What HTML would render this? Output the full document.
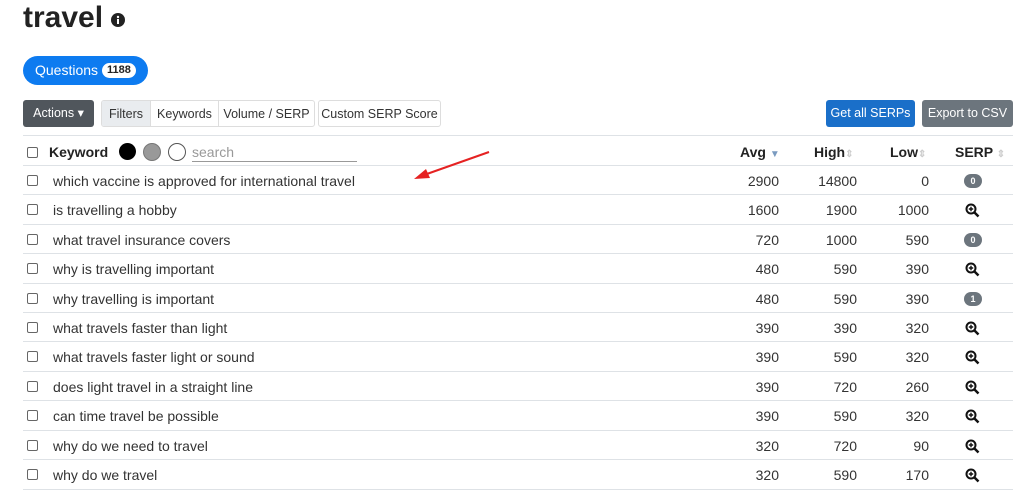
<!DOCTYPE html><html><head><style>
body{margin:0;width:1024px;height:494px;background:#fff;font-family:"Liberation Sans",sans-serif;color:#212529;position:relative;overflow:hidden}
.a{position:absolute}
h1{position:absolute;left:23px;top:0;margin:0;font-size:30px;font-weight:bold;line-height:36px;color:#222}
.btn{position:absolute;top:100px;height:27px;line-height:27px;font-size:12.5px;border-radius:3px;text-align:center;box-sizing:border-box;white-space:nowrap}
.row{position:absolute;left:23px;width:990px;height:29px;border-top:1px solid #dee2e6;font-size:14px;color:#333}
.row span{position:absolute;top:7px;white-space:nowrap}
.cb{position:absolute;left:4px;top:9px;width:9px;height:9px;border:1px solid #666;border-radius:2px}
.r{text-align:right;width:60px}
.bd{position:absolute;left:941px;top:8px;width:18px;height:14px;border-radius:7px;background:#6c757d;color:#fff;font-size:9px;font-weight:bold;text-align:center;line-height:14px}
</style></head><body>
<h1>travel <svg width="14" height="14" viewBox="0 0 14 14" style="vertical-align:0"><circle cx="7" cy="7" r="7" fill="#222"/><rect x="6" y="6" width="2" height="5" fill="#fff"/><circle cx="7" cy="4" r="1.2" fill="#fff"/></svg></h1>
<div class="a" style="left:23px;top:56px;width:125px;height:29px;border-radius:15px;background:#0d7bf0;color:#fff;font-size:14px;line-height:29px"><span style="margin-left:12px">Questions</span><span style="position:absolute;left:79px;top:7px;background:#fff;color:#222;font-size:11px;font-weight:bold;line-height:15px;padding:0 5px;border-radius:8px">1188</span></div>
<div class="btn" style="left:23px;width:71px;background:#50565c;color:#fff">Actions ▾</div>
<div class="btn" style="left:101px;width:214px;border:1px solid #ddd;color:#333;text-align:left;overflow:hidden;display:flex"><span style="width:48px;text-align:center;background:#e9ecef;border-right:1px solid #ddd">Filters</span><span style="width:67px;text-align:center;border-right:1px solid #ddd">Keywords</span><span style="flex:1;text-align:center">Volume / SERP</span></div>
<div class="btn" style="left:318px;width:123px;border:1px solid #ddd;color:#333">Custom SERP Score</div>
<div class="btn" style="left:826px;width:89px;background:#1a6fc9;color:#fff">Get all SERPs</div>
<div class="btn" style="left:922px;width:91px;background:#6c757d;color:#fff">Export to CSV</div>
<div class="row" style="top:135px;height:30px;font-weight:bold;color:#222">
<div class="cb" style="top:11px"></div><span style="left:26px;top:8px">Keyword</span>
<div class="a" style="left:96px;top:7px;width:17px;height:17px;border-radius:50%;background:#000"></div>
<div class="a" style="left:120px;top:7px;width:16px;height:16px;border-radius:50%;background:#999;border:1px solid #777"></div>
<div class="a" style="left:145px;top:7px;width:16px;height:16px;border-radius:50%;border:1px solid #555"></div>
<div class="a" style="left:169px;top:8px;width:165px;height:17px;border-bottom:1px solid #999;font-weight:normal;color:#999;font-size:14px">search</div>
<span style="left:717px;top:8px">Avg <span style="position:static;color:#7a9bc0;font-size:10px">▼</span></span>
<span style="left:791px;top:8px">High<span style="position:static;color:#ccc;font-size:10px">⇕</span></span>
<span style="left:867px;top:8px">Low<span style="position:static;color:#ccc;font-size:10px">⇕</span></span>
<span style="left:932px;top:8px">SERP <span style="position:static;color:#ccc;font-size:10px">⇕</span></span>
</div>
<div id="rows"></div>
<svg class="a" style="left:0;top:0" width="1024" height="494"><line x1="489" y1="152" x2="424" y2="175" stroke="#e52222" stroke-width="2"/><polygon points="414,179 426,169 430,178" fill="#e52222"/></svg>
<script>
var d=[["which vaccine is approved for international travel",2900,14800,0,"0"],["is travelling a hobby",1600,1900,1000,""],["what travel insurance covers",720,1000,590,"0"],["why is travelling important",480,590,390,""],["why travelling is important",480,590,390,"1"],["what travels faster than light",390,390,320,""],["what travels faster light or sound",390,590,320,""],["does light travel in a straight line",390,720,260,""],["can time travel be possible",390,590,320,""],["why do we need to travel",320,720,90,""],["why do we travel",320,590,170,""]];
var h="";d.forEach(function(r,i){var t=165+i*29.4;h+='<div class="row" style="top:'+t+'px"><div class="cb"></div><span style="left:30px">'+r[0]+'</span><span class="r" style="left:696px">'+r[1]+'</span><span class="r" style="left:774px">'+r[2]+'</span><span class="r" style="left:846px">'+r[3]+'</span>'+(r[4]?'<div class="bd">'+r[4]+'</div>':'<svg class="a" style="left:942px;top:8px" width="15" height="15" viewBox="0 0 15 15"><circle cx="6" cy="6" r="4.5" fill="none" stroke="#111" stroke-width="2"/><line x1="9.5" y1="9.5" x2="13.5" y2="13.5" stroke="#111" stroke-width="2.5"/><path d="M6 3.8v4.4M3.8 6h4.4" stroke="#111" stroke-width="1.4"/></svg>')+'</div>'});
document.getElementById("rows").innerHTML=h;
</script>
<div class="a" style="left:23px;top:489px;width:990px;border-top:1px solid #dee2e6"></div>
</body></html>
